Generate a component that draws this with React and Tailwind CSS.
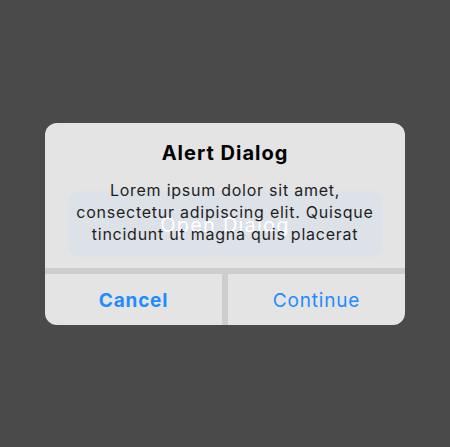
export default function App() {
  return (
    <div className="relative h-[447px] w-full bg-[#4a4a4a] flex items-center justify-center" style={{ fontFamily: 'Inter, "Noto Sans", sans-serif' }}>
      <button className="w-[315px] h-[66px] rounded-[10px] bg-[#1c3766] text-white text-[20px] tracking-[1.2px] pt-[2px]">Open Dialog</button>

      <div className="absolute inset-0 flex items-center justify-center">
        <div className="w-[360px] rounded-[12px] bg-white/85 overflow-hidden flex flex-col">
          <div className="pt-[18px] pb-[23px] px-4 flex flex-col items-center gap-[14px] text-center">
            <h2 className="text-[20px] leading-[24px] font-bold text-black tracking-[1px]">Alert Dialog</h2>
            <p className="text-[16px] leading-[22px] text-[#1f1f1f] tracking-[0.75px]">
              Lorem ipsum dolor sit amet,<br />
              consectetur adipiscing elit. Quisque<br />
              tincidunt ut magna quis placerat
            </p>
          </div>
          <div className="h-[6px] bg-[#cdcdcd]" />
          <div className="flex h-[51px]">
            <button className="flex-1 pt-[5px] text-[19px] font-bold text-[#1e8cff] tracking-[0.8px]">Cancel</button>
            <div className="w-[6px] bg-[#cdcdcd]" />
            <button className="flex-1 pt-[5px] text-[19px] text-[#1e8cff] tracking-[0.8px]">Continue</button>
          </div>
        </div>
      </div>
    </div>
  );
}
